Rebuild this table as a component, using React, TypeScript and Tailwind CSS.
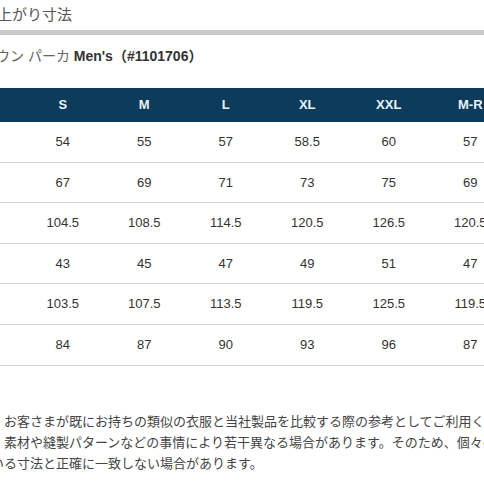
import React from "react";

const SIZES = ["S", "M", "L", "XL", "XXL", "M-R"];

const ROWS = [
  ["54", "55", "57", "58.5", "60", "57"],
  ["67", "69", "71", "73", "75", "69"],
  ["104.5", "108.5", "114.5", "120.5", "126.5", "120.5"],
  ["43", "45", "47", "49", "51", "47"],
  ["103.5", "107.5", "113.5", "119.5", "125.5", "119.5"],
  ["84", "87", "90", "93", "96", "87"],
];

const FONT = "font-['Liberation_Sans','Noto_Sans_CJK_JP',sans-serif]";

export default function App() {
  return (
    <div className={`w-[484px] h-[484px] overflow-hidden bg-white ${FONT}`}>
      <div className="-ml-[18px] w-[560px]">
        <h2 className="pt-[4px] text-[15px] leading-[22px] text-[#555] font-normal whitespace-nowrap">
          仕上がり寸法
        </h2>
        <div className="mt-[4px] h-[5px] bg-[#cacaca]" />
        <p className="mt-[10px] text-[14px] leading-[22px] whitespace-nowrap">
          <span className="text-[#666]">ダウン パーカ </span>
          <span className="font-bold text-[#333]">Men's（#1101706）</span>
        </p>
      </div>

      <div className="mt-[21px] -ml-[60px] w-[650px]">
        <div className="flex h-[34px] items-center bg-[#0d3b5b] text-[13px] font-bold text-[#e8f4fa]">
          <div className="w-[82px] shrink-0" />
          {SIZES.map((s) => (
            <div key={s} className="w-[81.5px] shrink-0 text-center">
              {s}
            </div>
          ))}
        </div>
        {ROWS.map((row, i) => (
          <div
            key={i}
            className="flex h-[40.6px] items-center border-b border-[#d2d2d2] text-[13px] text-[#333]"
          >
            <div className="w-[82px] shrink-0" />
            {row.map((v, j) => (
              <div key={j} className="w-[81.5px] shrink-0 text-center">
                {v}
              </div>
            ))}
          </div>
        ))}
      </div>

      <div className="mt-[45px] -ml-[9px] text-[13px] leading-[21px] text-[#444] whitespace-nowrap">
        <p>　お客さまが既にお持ちの類似の衣服と当社製品を比較する際の参考としてご利用ください。</p>
        <p>　素材や縫製パターンなどの事情により若干異なる場合があります。そのため、個々の商品によっては表示して</p>
        <p>いる寸法と正確に一致しない場合があります。</p>
      </div>
    </div>
  );
}
